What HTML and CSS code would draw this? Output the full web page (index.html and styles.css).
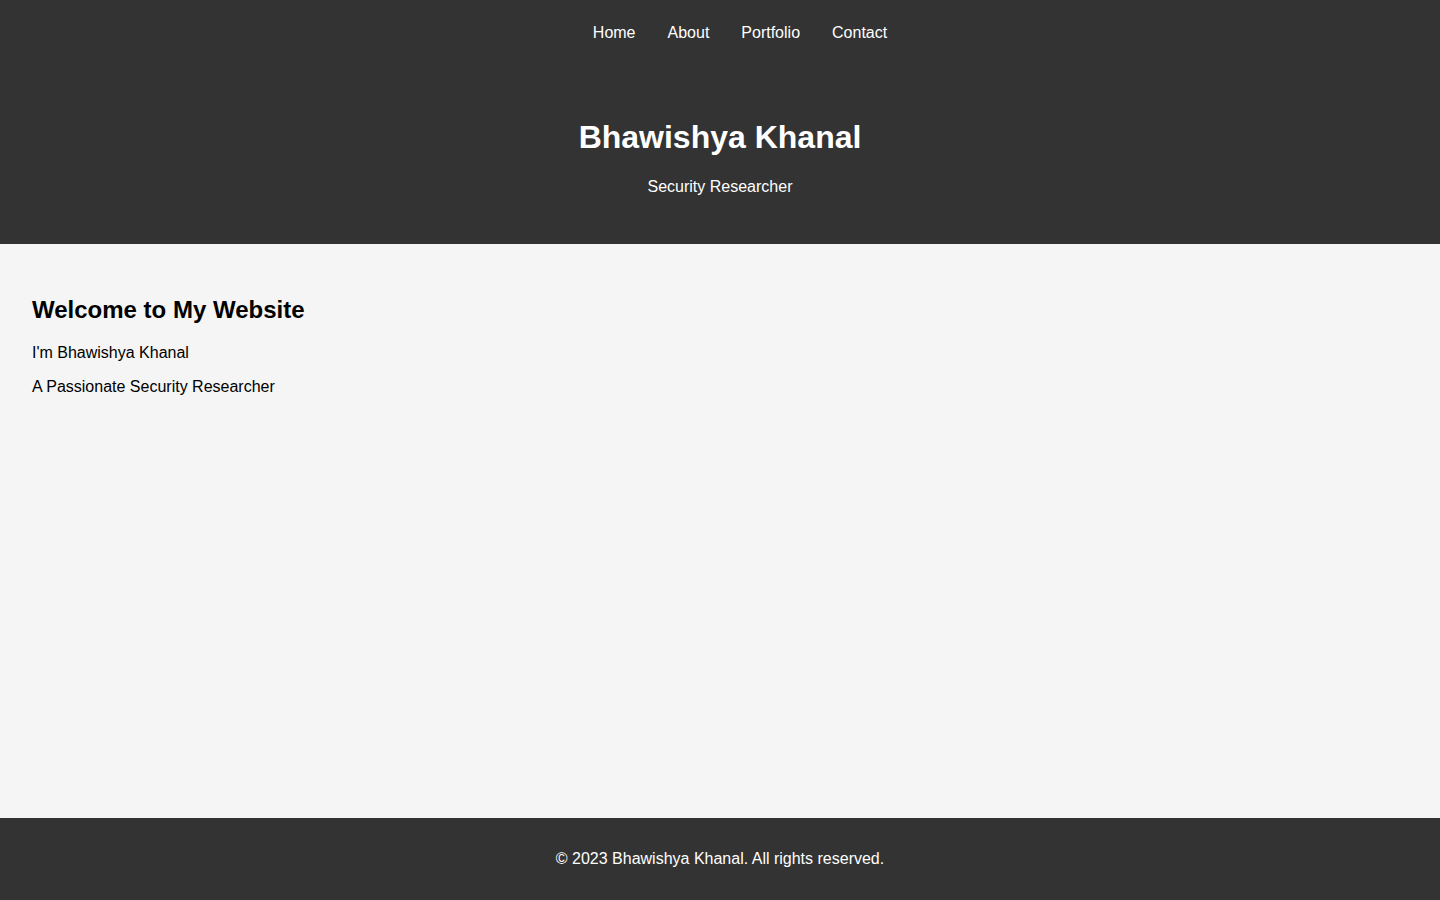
FILE: index.html
```html
<!DOCTYPE html>
<html lang="en">
<head>
<meta charset="utf-8">
<title>Bhawishya Khanal</title>
<link rel="stylesheet" href="styles.css">
</head>
<body>
<header class="site-header">
  <nav class="nav">
    <ul class="nav-list">
      <li><a class="nav-link" href="#">Home</a></li>
      <li><a class="nav-link" href="#">About</a></li>
      <li><a class="nav-link" href="#">Portfolio</a></li>
      <li><a class="nav-link" href="#">Contact</a></li>
    </ul>
  </nav>
  <div class="hero">
    <h1 class="hero-title">Bhawishya Khanal</h1>
    <p class="hero-sub">Security Researcher</p>
  </div>
</header>
<main class="content">
  <h2 class="content-title">Welcome to My Website</h2>
  <p class="content-text">I'm Bhawishya Khanal</p>
  <p class="content-text">A Passionate Security Researcher</p>
</main>
<footer class="site-footer">
  <p class="footer-text">&copy; 2023 Bhawishya Khanal. All rights reserved.</p>
</footer>
</body>
</html>
```

FILE: styles.css
```css
html, body {
  margin: 0;
  padding: 0;
}
body {
  font-family: "Liberation Sans", Arial, sans-serif;
  font-size: 16px;
  background: #f5f5f5;
  color: #000;
  min-height: 100vh;
  display: flex;
  flex-direction: column;
}
.site-header {
  background: #333;
  color: #fff;
  text-align: center;
}
.nav-list {
  list-style: none;
  margin: 0;
  padding: 24px 0 0 40px;
  display: flex;
  justify-content: center;
  gap: 32px;
}
.nav-link {
  color: #fff;
  text-decoration: none;
}
.hero {
  padding: 77px 0 48px;
}
.hero-title {
  margin: 0 0 22.4px;
  font-size: 32px;
  font-weight: bold;
}
.hero-sub {
  margin: 0;
}
.content {
  flex: 1;
  padding: 32px;
}
.content-title {
  font-size: 24px;
  margin: 19.9px 0;
}
.content-text {
  margin: 16px 0;
}
.site-footer {
  background: #333;
  color: #fff;
  text-align: center;
  padding: 32px;
}
.footer-text {
  margin: 0;
}
```
